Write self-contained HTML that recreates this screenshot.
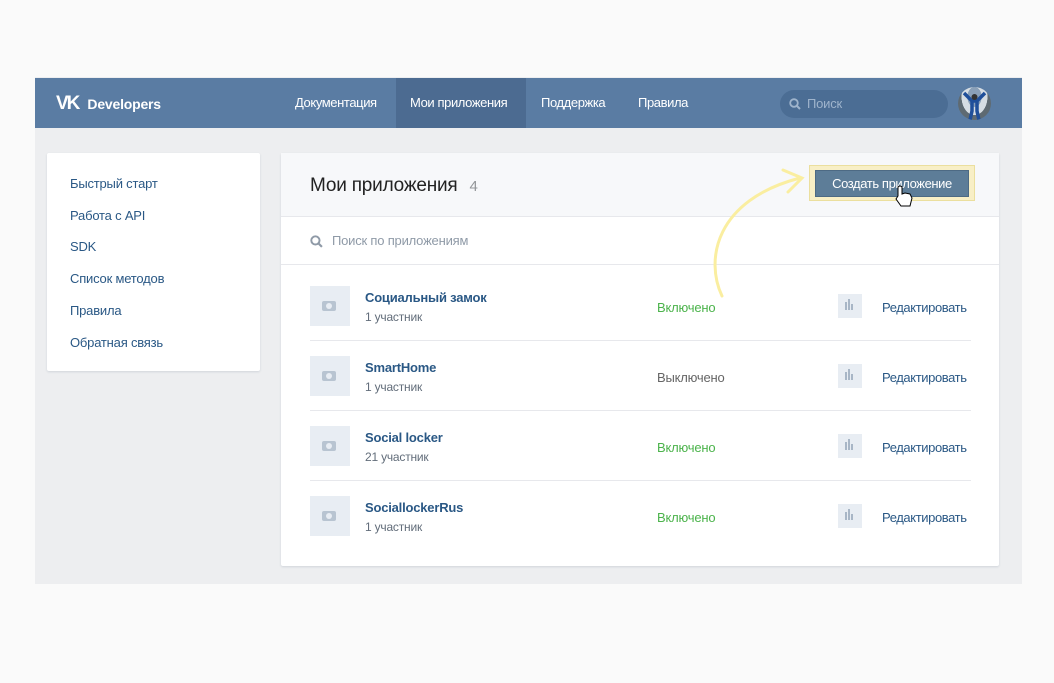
<!DOCTYPE html>
<html><head><meta charset="utf-8"><style>
*{box-sizing:border-box;margin:0;padding:0}
body{width:1054px;height:683px;background:#fafafa;font-family:"Liberation Sans","DejaVu Sans",sans-serif;position:relative;overflow:hidden;letter-spacing:-0.2px}
.app{position:absolute;left:35px;top:77px;width:987px;height:507px;background:#edeef0}
.hdr{position:absolute;left:0;top:1px;width:987px;height:50px;background:#5a7ca3}
.logo{position:absolute;left:21px;top:15px;color:#fff;font-weight:bold;font-size:14px}
.nav{position:absolute;top:0;height:50px;line-height:50px;color:#fff;font-size:13px;padding:0 14px;white-space:nowrap;letter-spacing:-0.4px}
.srch{position:absolute;left:745px;top:12px;width:168px;height:28px;border-radius:14px;background:#4b6d94;color:#9fb4cc;font-size:13px;line-height:28px;padding-left:27px}
.ava{position:absolute;left:923px;top:9px;width:33px;height:33px;border-radius:50%;background:radial-gradient(ellipse at 50% 30%,#8aa0b8 0 30%,#d6dde3 31% 55%,#5e6a72 56%);overflow:hidden}
.side{position:absolute;left:12px;top:76px;width:213px;height:218px;background:#fff;border-radius:2px;box-shadow:0 1px 2px #d0d4da}
.side div{position:absolute;left:23px;font-size:13px;color:#2a5885}
.main{position:absolute;left:246px;top:76px;width:718px;height:413px;background:#fff;border-radius:2px;box-shadow:0 1px 2px #d0d4da}
.mh{height:64px;background:#f7f8fa;border-bottom:1px solid #e7e8ec;position:relative}
.mh h1{position:absolute;left:29px;top:22px;font-size:19px;font-weight:normal;color:#222}
.mh h1 span{color:#939699;font-size:15px;margin-left:12px}
.btn{position:absolute;left:528px;top:12px;width:166px;height:36px;background:#f8efc6;border:1px solid #ebdf9e}
.btn div{position:absolute;left:5px;top:4px;width:154px;height:27px;background:#5d7d98;border:1px solid #4d6a84;color:#fff;font-size:13px;text-align:center;line-height:25px;white-space:nowrap;letter-spacing:-0.4px}
.ms{height:48px;border-bottom:1px solid #e7e8ec;position:relative;color:#8f9aa7;font-size:13px;line-height:48px;padding-left:51px}
.row{position:absolute;left:29px;width:661px;height:70px;border-bottom:1px solid #e7e8ec}
.ic{position:absolute;left:0;top:15px;width:40px;height:40px;background:#e8edf3}
.nm{position:absolute;left:55px;top:19px;font-size:13px;font-weight:bold;color:#2a5885}
.sub{position:absolute;left:55px;top:39px;font-size:12px;color:#626d7a}
.st{position:absolute;left:347px;top:29px;font-size:13px;color:#4bb34b}
.st.off{color:#656565}
.bar{position:absolute;left:528px;top:23px;width:24px;height:24px;background:#e8edf3}
.ed{position:absolute;left:572px;top:29px;font-size:13px;color:#2a5885;letter-spacing:-0.4px}
</style></head><body>
<div class="app">
<div class="hdr">
<div class="logo"><span style="font-size:19px;letter-spacing:-2px;font-weight:900;margin-right:9px">VK</span>Developers</div>
<div class="nav" style="left:246px">Документация</div>
<div class="nav" style="left:361px;width:130px;background:#4c6b91">Мои приложения</div>
<div class="nav" style="left:492px">Поддержка</div>
<div class="nav" style="left:589px">Правила</div>
<div class="srch"><svg style="position:absolute;left:9px;top:8px" width="12" height="12" viewBox="0 0 12 12"><circle cx="5" cy="5" r="3.8" fill="none" stroke="#9fb4cc" stroke-width="1.8"/><path d="M8 8l3 3" stroke="#9fb4cc" stroke-width="2"/></svg>Поиск</div>
<div class="ava"><svg width="33" height="33" viewBox="0 0 33 33"><path d="M6 6 L14 14 L14 24 L12 33 M27 6 L19 14 L19 24 L21 33 M14 14 H19" stroke="#1f4f9a" stroke-width="3.5" fill="none"/><circle cx="16.5" cy="10" r="3" fill="#333"/></svg></div>
</div>
<div class="side">
<div style="top:23px">Быстрый старт</div>
<div style="top:55px">Работа с API</div>
<div style="top:86px">SDK</div>
<div style="top:118px">Список методов</div>
<div style="top:150px">Правила</div>
<div style="top:182px">Обратная связь</div>
</div>
<div class="main">
<div class="mh"><h1>Мои приложения<span>4</span></h1><div class="btn"><div>Создать приложение</div></div></div>
<div class="ms"><svg style="position:absolute;left:29px;top:18px" width="13" height="13" viewBox="0 0 12 12"><circle cx="5" cy="5" r="3.8" fill="none" stroke="#8f9aa7" stroke-width="1.8"/><path d="M8 8l3 3" stroke="#8f9aa7" stroke-width="2"/></svg>Поиск по приложениям</div>
<div class="row" style="top:118px"><div class="ic"></div><div class="nm">Социальный замок</div><div class="sub">1 участник</div><div class="st">Включено</div><div class="bar"></div><div class="ed">Редактировать</div></div>
<div class="row" style="top:188px"><div class="ic"></div><div class="nm">SmartHome</div><div class="sub">1 участник</div><div class="st off">Выключено</div><div class="bar"></div><div class="ed">Редактировать</div></div>
<div class="row" style="top:258px"><div class="ic"></div><div class="nm">Social locker</div><div class="sub">21 участник</div><div class="st">Включено</div><div class="bar"></div><div class="ed">Редактировать</div></div>
<div class="row" style="top:328px;border:none"><div class="ic"></div><div class="nm">SociallockerRus</div><div class="sub">1 участник</div><div class="st">Включено</div><div class="bar"></div><div class="ed">Редактировать</div></div>
</div>
</div>
<svg style="position:absolute;left:0;top:0" width="1054" height="683">
<g fill="#b8c4d1"><g id="c">
<rect x="322" y="301" width="14" height="10" rx="2"/><circle cx="329" cy="306" r="3" fill="#e8edf3"/></g>
<use href="#c" y="70"/><use href="#c" y="140"/><use href="#c" y="210"/></g>
<g fill="#a8b6c6"><g id="b"><rect x="845" y="302" width="2" height="8"/><rect x="848" y="299" width="2" height="11"/><rect x="851" y="304" width="2" height="6"/></g>
<use href="#b" y="70"/><use href="#b" y="140"/><use href="#b" y="210"/></g>
<path d="M722 296 C705 260 715 200 800 178" fill="none" stroke="#faeea0" stroke-width="3" stroke-linecap="round"/>
<path d="M783 170 L802 178 L788 192" fill="none" stroke="#faeea0" stroke-width="3" stroke-linecap="round"/>
<path d="M898 196 v-9 q2-2 4 0 v7 l3-1 l5 1 l2 4 l-2 8 h-9 l-5-7 z" fill="#fff" stroke="#000" stroke-width="1"/>
</svg>
</body></html>
